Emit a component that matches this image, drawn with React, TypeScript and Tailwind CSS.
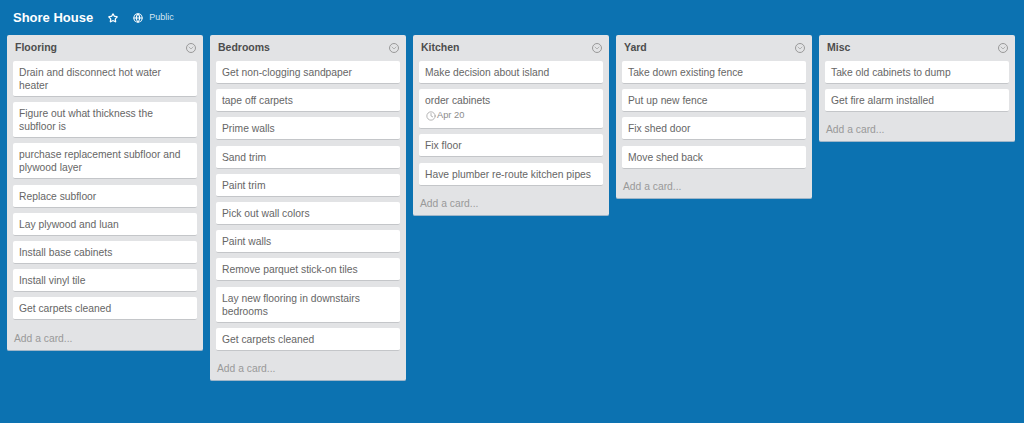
import React from 'react';
import { Star, Globe, ChevronDown, Clock } from 'lucide-react';

interface CardData {
  title: string;
  due?: string;
}

interface ListData {
  name: string;
  cards: CardData[];
}

const lists: ListData[] = [
  {
    name: 'Flooring',
    cards: [
      { title: 'Drain and disconnect hot water heater' },
      { title: 'Figure out what thickness the subfloor is' },
      { title: 'purchase replacement subfloor and plywood layer' },
      { title: 'Replace subfloor' },
      { title: 'Lay plywood and luan' },
      { title: 'Install base cabinets' },
      { title: 'Install vinyl tile' },
      { title: 'Get carpets cleaned' },
    ],
  },
  {
    name: 'Bedrooms',
    cards: [
      { title: 'Get non-clogging sandpaper' },
      { title: 'tape off carpets' },
      { title: 'Prime walls' },
      { title: 'Sand trim' },
      { title: 'Paint trim' },
      { title: 'Pick out wall colors' },
      { title: 'Paint walls' },
      { title: 'Remove parquet stick-on tiles' },
      { title: 'Lay new flooring in downstairs bedrooms' },
      { title: 'Get carpets cleaned' },
    ],
  },
  {
    name: 'Kitchen',
    cards: [
      { title: 'Make decision about island' },
      { title: 'order cabinets', due: 'Apr 20' },
      { title: 'Fix floor' },
      { title: 'Have plumber re-route kitchen pipes' },
    ],
  },
  {
    name: 'Yard',
    cards: [
      { title: 'Take down existing fence' },
      { title: 'Put up new fence' },
      { title: 'Fix shed door' },
      { title: 'Move shed back' },
    ],
  },
  {
    name: 'Misc',
    cards: [
      { title: 'Take old cabinets to dump' },
      { title: 'Get fire alarm installed' },
    ],
  },
];

function Card({ card }: { card: CardData }) {
  return (
    <div className="bg-white rounded-[2px] border-b border-[#c4c6c9] px-[6px] pt-[5px] pb-[4px] mb-[5.2px] text-[10.3px] leading-[13px] text-[#666666]">
      <div>{card.title}</div>
      {card.due && (
        <div className="flex items-center gap-[1px] h-[17px] ml-[1px] text-[9.3px] text-[#8c8c8c]">
          <Clock size={10} strokeWidth={1.5} />
          <span>{card.due}</span>
        </div>
      )}
    </div>
  );
}

function List({ list }: { list: ListData }) {
  return (
    <div className="w-[196px] shrink-0 bg-[#e2e3e5] rounded-[2px] border-b border-[#9fb6c9] px-[6px]">
      <div className="flex items-center justify-between h-[26px] pl-[2px] pr-[1px]">
        <h2 className="text-[10.5px] font-bold text-[#4d4d4d]">{list.name}</h2>
        <span className="w-[10px] h-[10px] rounded-full border border-[#999999] flex items-center justify-center text-[#999999]">
          <ChevronDown size={8} strokeWidth={2} />
        </span>
      </div>
      {list.cards.map((card, i) => (
        <Card key={i} card={card} />
      ))}
      <div className="h-[24px] pt-[5px] pl-[1px] text-[10.3px] leading-[15px] text-[#999999]">Add a card...</div>
    </div>
  );
}

export default function App() {
  return (
    <div className="w-[1024px] h-[423px] overflow-hidden bg-[#0c72b1] font-['Liberation_Sans',Arial,sans-serif]">
      <div className="flex items-center h-[35px] pl-[13px] text-white">
        <h1 className="text-[13px] font-bold">Shore House</h1>
        <Star size={10} strokeWidth={3} className="ml-[15px]" />
        <Globe size={10} strokeWidth={2.5} className="ml-[15px]" />
        <span className="ml-[6px] text-[9px] text-[#d6e6f2]">Public</span>
      </div>
      <div className="flex items-start gap-[7px] pl-[7px]">
        {lists.map(list => (
          <List key={list.name} list={list} />
        ))}
      </div>
    </div>
  );
}
